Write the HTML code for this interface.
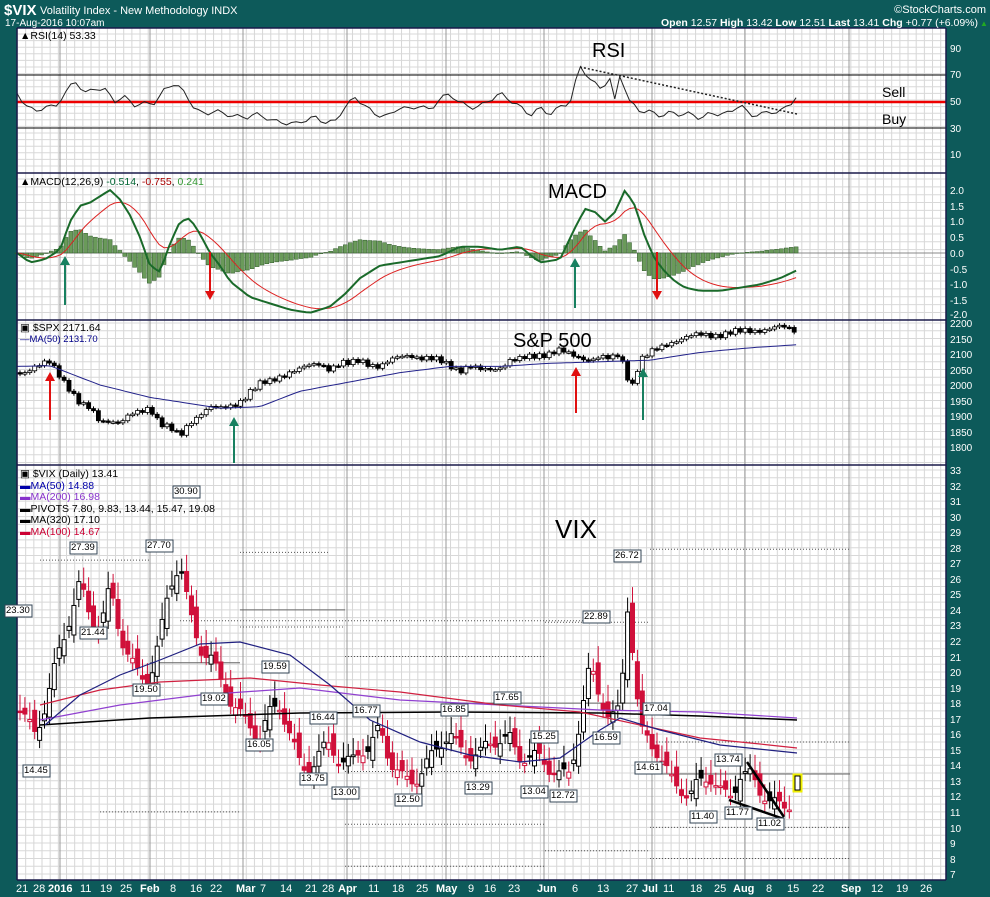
<!DOCTYPE html>
<html><head><meta charset="utf-8"><style>
html,body{margin:0;padding:0;background:#0d5a5a;}
svg{display:block;font-family:"Liberation Sans",sans-serif;}
</style></head><body>
<svg id="s" width="990" height="897" viewBox="0 0 990 897">
<defs>
<pattern id="gv" x="17" y="0" width="8.17" height="897" patternUnits="userSpaceOnUse"><line x1="0.5" y1="0" x2="0.5" y2="897" stroke="#d6d6d6" stroke-width="1"/></pattern>
</defs>
<rect x="0" y="0" width="990" height="897" fill="#0d5a5a"/>
<rect x="17" y="28" width="929" height="852" fill="#fff"/>
<rect x="17" y="28" width="929" height="852" fill="url(#gv)"/>
<g id="hg"></g>
<g id="mg"></g>
<g id="plot"></g>
<g stroke="#1a1a4a" stroke-width="1.5" fill="none">
<line x1="17" y1="28" x2="946" y2="28"/>
<line x1="17" y1="173" x2="946" y2="173"/>
<line x1="17" y1="320" x2="946" y2="320"/>
<line x1="17" y1="465" x2="946" y2="465"/>
<line x1="17" y1="880" x2="946" y2="880"/>
<line x1="17" y1="28" x2="17" y2="880"/>
<line x1="946" y1="28" x2="946" y2="880"/>
</g>
<text x="4" y="15" fill="#fff" font-size="15" font-weight="bold">$VIX</text>
<text x="40" y="14" fill="#fff" font-size="11">Volatility Index - New Methodology  INDX</text>
<text x="5" y="26" fill="#fff" font-size="10">17-Aug-2016 10:07am</text>
<text x="986" y="13" fill="#fff" font-size="11" text-anchor="end">©StockCharts.com</text>
<text x="978" y="26" fill="#fff" font-size="10.5" text-anchor="end"><tspan font-weight="bold">Open</tspan> 12.57 <tspan font-weight="bold">High</tspan> 13.42 <tspan font-weight="bold">Low</tspan> 12.51 <tspan font-weight="bold">Last</tspan> 13.41 <tspan font-weight="bold">Chg</tspan> +0.77 (+6.09%)</text>
<text x="980" y="26" fill="#2a2" font-size="8">▲</text>
<text x="20" y="39" font-size="10.5" fill="#000">▲RSI(14) 53.33</text>
<text x="20" y="185" font-size="10.5" fill="#000">▲MACD(12,26,9) <tspan fill="#063">-0.514</tspan>, <tspan fill="#a00">-0.755</tspan>, <tspan fill="#393">0.241</tspan></text>
<text x="20" y="331" font-size="10.5" fill="#000">▣ $SPX 2171.64</text>
<text x="20" y="342" font-size="9.5" fill="#008"><tspan>—</tspan>MA(50) 2131.70</text>
<g font-size="10.5">
<text x="20" y="477" fill="#000">▣ $VIX (Daily) 13.41</text>
<text x="20" y="489" fill="#00a">▬MA(50) 14.88</text>
<text x="20" y="500" fill="#83c">▬MA(200) 16.98</text>
<text x="20" y="512" fill="#000">▬PIVOTS 7.80, 9.83, 13.44, 15.47, 19.08</text>
<text x="20" y="523" fill="#000">▬MA(320) 17.10</text>
<text x="20" y="535" fill="#c03">▬MA(100) 14.67</text>
</g>
<text x="592" y="57" font-size="20" fill="#000">RSI</text>
<text x="548" y="198" font-size="20" fill="#000">MACD</text>
<text x="513" y="347" font-size="20" fill="#000">S&amp;P 500</text>
<text x="555" y="538" font-size="26" fill="#000">VIX</text>
<text x="882" y="97" font-size="14" fill="#000">Sell</text>
<text x="882" y="124" font-size="14" fill="#000">Buy</text>
<g fill="#fff" font-size="10">
<text x="950" y="52">90</text><text x="950" y="78">70</text><text x="950" y="105">50</text><text x="950" y="132">30</text><text x="950" y="158">10</text>
<text x="950" y="194">2.0</text><text x="950" y="210">1.5</text><text x="950" y="225">1.0</text><text x="950" y="241">0.5</text><text x="950" y="257">0.0</text><text x="950" y="273">-0.5</text><text x="950" y="288">-1.0</text><text x="950" y="304">-1.5</text><text x="950" y="318">-2.0</text>
<text x="950" y="327">2200</text><text x="950" y="343">2150</text><text x="950" y="358">2100</text><text x="950" y="374">2050</text><text x="950" y="389">2000</text><text x="950" y="405">1950</text><text x="950" y="420">1900</text><text x="950" y="436">1850</text><text x="950" y="451">1800</text>
<text x="950" y="474">33</text><text x="950" y="490">32</text><text x="950" y="505">31</text><text x="950" y="521">30</text><text x="950" y="536">29</text><text x="950" y="552">28</text><text x="950" y="567">27</text><text x="950" y="583">26</text><text x="950" y="598">25</text><text x="950" y="614">24</text><text x="950" y="629">23</text><text x="950" y="645">22</text><text x="950" y="661">21</text><text x="950" y="676">20</text><text x="950" y="692">19</text><text x="950" y="707">18</text><text x="950" y="723">17</text><text x="950" y="738">16</text><text x="950" y="754">15</text><text x="950" y="769">14</text><text x="950" y="785">13</text><text x="950" y="800">12</text><text x="950" y="816">11</text><text x="950" y="832">10</text><text x="950" y="847">9</text><text x="950" y="863">8</text><text x="950" y="878">7</text>
</g>
<g fill="#fff" font-size="11">
<text x="16" y="892">21</text><text x="33" y="892">28</text><text x="48" y="892" font-weight="bold">2016</text><text x="80" y="892">11</text><text x="100" y="892">19</text><text x="120" y="892">25</text><text x="140" y="892" font-weight="bold">Feb</text><text x="170" y="892">8</text><text x="190" y="892">16</text><text x="210" y="892">22</text><text x="236" y="892" font-weight="bold">Mar</text><text x="260" y="892">7</text><text x="280" y="892">14</text><text x="305" y="892">21</text><text x="322" y="892">28</text><text x="338" y="892" font-weight="bold">Apr</text><text x="368" y="892">11</text><text x="392" y="892">18</text><text x="416" y="892">25</text><text x="436" y="892" font-weight="bold">May</text><text x="468" y="892">9</text><text x="484" y="892">16</text><text x="508" y="892">23</text><text x="537" y="892" font-weight="bold">Jun</text><text x="572" y="892">6</text><text x="597" y="892">13</text><text x="626" y="892">27</text><text x="642" y="892" font-weight="bold">Jul</text><text x="663" y="892">11</text><text x="690" y="892">18</text><text x="714" y="892">25</text><text x="733" y="892" font-weight="bold">Aug</text><text x="766" y="892">8</text><text x="787" y="892">15</text><text x="812" y="892">22</text><text x="841" y="892" font-weight="bold">Sep</text><text x="871" y="892">12</text><text x="896" y="892">19</text><text x="920" y="892">26</text>
</g>
<g id="lbl"></g>
</svg>
<script>
var NS="http://www.w3.org/2000/svg";
function el(p,t,a){var e=document.createElementNS(NS,t);for(var k in a)e.setAttribute(k,a[k]);p.appendChild(e);return e;}
var hg=document.getElementById('hg'),mg=document.getElementById('mg'),P=document.getElementById('plot');
function hl(y0,y1,st){for(var y=y0;y<=y1;y+=st)el(hg,'line',{x1:17,x2:946,y1:y,y2:y,stroke:'#d8d8d8'});}
hl(34,172,6.6);hl(179,320,7.85);hl(323,465,7.75);hl(470,880,7.77);
[60,150,243,347,446,544,652,745,849].forEach(function(x){el(mg,'line',{x1:x,x2:x,y1:28,y2:880,stroke:'#999'});});
el(mg,'line',{x1:17,x2:946,y1:75,y2:75,stroke:'#000'});
el(mg,'line',{x1:17,x2:946,y1:128,y2:128,stroke:'#000'});
el(mg,'line',{x1:17,x2:946,y1:102,y2:102,stroke:'#e00',"stroke-width":2.5});
el(mg,'line',{x1:17,x2:946,y1:253,y2:253,stroke:'#888'});
function interp(pts,x){if(x<=pts[0][0])return pts[0][1];for(var i=1;i<pts.length;i++){if(x<=pts[i][0]){var a=pts[i-1],b=pts[i];return a[1]+(b[1]-a[1])*(x-a[0])/(b[0]-a[0]);}}return pts[pts.length-1][1];}
function line(pts,fy,col,w,noise){var s='';for(var x=pts[0][0];x<=pts[pts.length-1][0];x+=4.9){var v=interp(pts,x)+(noise?noise*Math.sin(x*1.7)*Math.cos(x*0.53):0);s+=x.toFixed(1)+','+fy(v).toFixed(1)+' ';}el(P,'polyline',{points:s,fill:'none',stroke:col,'stroke-width':w||1});}
var rsi=[[17,55],[25,48],[35,44],[45,48],[55,46],[65,55],[75,65],[85,57],[95,62],[105,60],[115,50],[125,52],[135,47],[145,50],[155,51],[165,60],[175,63],[185,55],[195,45],[205,42],[215,45],[225,40],[235,38],[245,37],[255,42],[265,40],[275,36],[285,33],[295,32],[305,36],[315,40],[325,36],[335,35],[345,45],[355,52],[365,48],[375,42],[390,40],[400,45],[410,43],[420,48],[430,45],[440,54],[450,55],[460,48],[470,45],[480,48],[490,53],[500,57],[510,50],[520,45],[530,40],[540,47],[550,42],[560,46],[570,48],[580,76],[590,68],[600,62],[610,68],[615,50],[620,70],[630,48],[640,43],[650,44],[660,41],[670,42],[680,39],[690,40],[700,38],[710,43],[720,42],[730,41],[740,47],[750,39],[760,42],[770,44],[780,43],[790,47],[797,53]];
line(rsi,function(v){return 102-(v-50)*1.325;},'#222',1,3);
el(P,'line',{x1:580,y1:67,x2:797,y2:114,stroke:'#222','stroke-width':1.5,'stroke-dasharray':'2,2'});
var mY=function(v){return 253-v*31.5;};
var mac=[[17,0],[30,-0.3],[45,-0.2],[60,0.1],[70,1.0],[80,1.5],[90,1.6],[100,1.8],[110,2.0],[120,1.7],[130,1.2],[140,0.5],[150,-0.4],[160,-0.6],[170,0.3],[180,1.0],[190,1.1],[200,0.6],[210,0],[220,-0.4],[230,-0.9],[250,-1.4],[270,-1.6],[290,-1.8],[310,-1.9],[330,-1.7],[345,-1.3],[360,-0.8],[380,-0.4],[400,-0.3],[420,-0.2],[440,-0.1],[460,0.2],[480,0.2],[500,0.1],[520,0.2],[540,-0.3],[560,-0.2],[575,0.8],[585,1.4],[595,1.3],[605,1.0],[615,1.3],[625,2.0],[635,1.5],[645,0.5],[655,-0.2],[665,-0.6],[675,-0.9],[685,-1.1],[700,-1.2],[720,-1.2],[740,-1.1],[760,-1.0],[780,-0.8],[797,-0.55]];
var ms=[],sg=[],s=0,first=true;for(var x=17;x<=797;x+=4.9){var v=interp(mac,x);if(first){s=v;first=false;}s=s+(v-s)*0.2;ms.push([x,v]);sg.push([x,s]);}
ms.forEach(function(p,i){var h=(p[1]-sg[i][1]);var y0=253,y1=253-h*31.5*0.9;el(P,'rect',{x:p[0]-2,y:Math.min(y0,y1),width:4,height:Math.max(0.5,Math.abs(y1-y0)),fill:'#6a9a5a',stroke:'#2f5a2a','stroke-width':0.5});});
line(sg,mY,'#d22',1);line(ms,mY,'#1a6a2a',2);
function arrow(x,y1,y2,col){var up=y2<y1;el(P,'line',{x1:x,x2:x,y1:y1,y2:y2+(up?5:-5),stroke:col,'stroke-width':2});var d=up?'M'+(x-5)+','+(y2+9)+' L'+x+','+y2+' L'+(x+5)+','+(y2+9)+'Z':'M'+(x-5)+','+(y2-9)+' L'+x+','+y2+' L'+(x+5)+','+(y2-9)+'Z';el(P,'path',{d:d,fill:col});}
arrow(65,305,256,'#188060');arrow(575,308,258,'#188060');arrow(210,252,300,'#e01010');arrow(657,252,300,'#e01010');
var sY=function(p){return 323+(2200-p)*0.31;};
var spx=[[20,2040],[35,2060],[50,2070],[60,2030],[70,1990],[80,1940],[90,1920],[100,1880],[110,1890],[120,1880],[130,1900],[140,1910],[150,1930],[160,1880],[170,1860],[180,1830],[190,1880],[200,1910],[210,1930],[220,1920],[230,1930],[240,1950],[250,1980],[260,2000],[270,2010],[280,2030],[290,2045],[300,2050],[310,2060],[320,2070],[330,2055],[340,2070],[350,2065],[360,2080],[380,2060],[400,2090],[410,2100],[420,2090],[440,2075],[450,2065],[460,2050],[470,2060],[480,2045],[490,2050],[500,2060],[510,2080],[520,2080],[530,2090],[540,2100],[560,2110],[570,2095],[590,2085],[600,2090],[610,2080],[620,2100],[626,2040],[632,2000],[640,2080],[650,2100],[660,2120],[670,2140],[680,2150],[700,2160],[720,2165],[740,2170],[760,2180],[780,2185],[797,2175]];
var prev=2040;for(var x=20;x<=797;x+=4.9){var c=interp(spx,x)+14*Math.sin(x*2.3)*Math.cos(x*0.41);var o=prev;var hi=Math.max(o,c)+7,lo=Math.min(o,c)-7;el(P,'line',{x1:x,x2:x,y1:sY(hi),y2:sY(lo),stroke:'#000'});el(P,'rect',{x:x-2,y:sY(Math.max(o,c)),width:4,height:Math.max(1.5,Math.abs(sY(o)-sY(c))),fill:c>o?'#fff':'#000',stroke:'#000','stroke-width':0.8});prev=c;}
line([[17,2060],[50,2062],[100,2000],[150,1960],[220,1925],[260,1930],[300,1980],[350,2010],[400,2040],[450,2060],[500,2060],[550,2070],[600,2075],[650,2080],[700,2105],[750,2120],[797,2130]],sY,'#22228a',1);
arrow(50,420,372,'#e01010');arrow(576,413,367,'#e01010');arrow(234,463,417,'#188060');arrow(643,420,368,'#188060');
var vY=function(v){return 470+(33-v)*15.54;};
[[180,610,23.3],[240,330,27.7],[40,150,27.2],[240,345,22.9],[345,545,21.0],[345,545,13.6],[545,650,23.2],[545,650,8.5],[650,850,27.9],[650,850,10.0],[650,850,8.0],[650,850,15.5],[345,545,10.2],[100,240,11.0],[345,545,7.5]].forEach(function(a){el(P,'line',{x1:a[0],x2:a[1],y1:vY(a[2]),y2:vY(a[2]),stroke:'#555','stroke-dasharray':'1,2'});});
[[150,240,20.6],[240,345,24.0],[650,850,13.44],[450,650,18.0]].forEach(function(a){el(P,'line',{x1:a[0],x2:a[1],y1:vY(a[2]),y2:vY(a[2]),stroke:'#666'});});
var vix=[[20,17.5],[35,16.5],[45,18],[55,20],[65,22],[80,26],[90,24],[100,23],[110,25],[120,22],[130,21],[140,20],[150,20],[160,22],[170,25],[180,27],[190,24],[200,22],[210,21],[220,19],[230,18],[240,17.5],[250,17],[260,16],[270,17],[280,17.5],[290,16],[300,14.5],[310,14],[320,14.5],[330,15],[340,14],[350,14.5],[360,15.5],[370,15],[380,16],[390,14],[400,13.5],[410,13.5],[420,13.5],[430,14],[440,15],[450,16],[460,15.5],[470,15],[480,14.5],[490,15],[500,15.5],[510,16],[520,15],[530,14.5],[540,14],[550,13.5],[560,13.5],[570,14],[580,17],[590,20],[600,18],[610,17],[620,18],[628,25],[635,20],[640,16],[650,15],[660,14.5],[670,13.5],[680,13],[690,12],[700,12.5],[710,13],[720,12.5],[730,12.5],[740,13.5],[750,13],[760,12],[770,11.7],[780,11.8],[790,11.9]];
prev=17.5;for(var x=20;x<=792;x+=4.9){var c=interp(vix,x)+0.9*Math.sin(x*2.1)*Math.cos(x*0.7);var o=prev+0.6*Math.sin(x*3.3);var hi=Math.max(o,c)+0.6+0.5*Math.abs(Math.sin(x)),lo=Math.min(o,c)-0.5;var col=c<prev?'#d0103a':'#000';el(P,'line',{x1:x,x2:x,y1:vY(hi),y2:vY(lo),stroke:col});el(P,'rect',{x:x-2,y:vY(Math.max(o,c)),width:4,height:Math.max(1.5,Math.abs(vY(o)-vY(c))),fill:c>o?'#fff':col,stroke:col,'stroke-width':1});prev=c;}
el(P,'rect',{x:795,y:776,width:5,height:14,fill:'#fff',stroke:'#000'});
el(P,'rect',{x:793.5,y:774.5,width:8,height:17,fill:'none',stroke:'#ee0','stroke-width':2});
function yl(pts,col,w){var s=pts.map(function(p){return p[0]+','+p[1];}).join(' ');el(P,'polyline',{points:s,fill:'none',stroke:col,'stroke-width':w});}
yl([[40,725],[150,718],[300,713],[450,712],[600,713],[700,716],[797,720]],'#000',1.5);
yl([[40,720],[120,705],[200,695],[300,688],[400,700],[500,705],[600,710],[700,712],[797,718]],'#9040d0',1.2);
yl([[40,705],[100,690],[160,682],[250,678],[320,685],[400,692],[500,705],[580,712],[640,725],[700,738],[760,744],[797,748]],'#d02040',1.2);
yl([[45,725],[80,695],[120,675],[160,660],[200,644],[240,642],[290,655],[330,685],[370,720],[420,742],[470,755],[520,762],[560,758],[600,730],[620,718],[660,730],[720,745],[797,753]],'#202080',1.2);
el(P,'line',{x1:747,y1:762,x2:784,y2:817,stroke:'#000','stroke-width':2.5});
el(P,'line',{x1:729,y1:800,x2:784,y2:819,stroke:'#000','stroke-width':2.5});
var L=document.getElementById('lbl');
[[5,605],[70,542],[173,486],[146,540],[80,627],[133,684],[201,693],[262,661],[246,739],[310,712],[353,705],[300,773],[332,787],[395,794],[441,704],[494,692],[531,731],[465,782],[521,786],[550,790],[583,611],[614,550],[593,732],[643,703],[635,762],[715,754],[690,811],[725,807],[757,818],[23,765]].forEach(function(a){el(L,'rect',{x:a[0],y:a[1],width:27,height:12,fill:'#fff',stroke:'#345','stroke-width':1});});
</script>
<div style="position:absolute;left:0;top:0;width:990px;height:897px;pointer-events:none;font-family:'Liberation Sans',sans-serif;font-size:9.5px;color:#000">
<span style="position:absolute;left:6px;top:605px">23.30</span><span style="position:absolute;left:71px;top:542px">27.39</span><span style="position:absolute;left:174px;top:486px">30.90</span><span style="position:absolute;left:147px;top:540px">27.70</span><span style="position:absolute;left:81px;top:627px">21.44</span><span style="position:absolute;left:134px;top:684px">19.50</span><span style="position:absolute;left:202px;top:693px">19.02</span><span style="position:absolute;left:263px;top:661px">19.59</span><span style="position:absolute;left:247px;top:739px">16.05</span><span style="position:absolute;left:311px;top:712px">16.44</span><span style="position:absolute;left:354px;top:705px">16.77</span><span style="position:absolute;left:301px;top:773px">13.75</span><span style="position:absolute;left:333px;top:787px">13.00</span><span style="position:absolute;left:396px;top:794px">12.50</span><span style="position:absolute;left:442px;top:704px">16.85</span><span style="position:absolute;left:495px;top:692px">17.65</span><span style="position:absolute;left:532px;top:731px">15.25</span><span style="position:absolute;left:466px;top:782px">13.29</span><span style="position:absolute;left:522px;top:786px">13.04</span><span style="position:absolute;left:551px;top:790px">12.72</span><span style="position:absolute;left:584px;top:611px">22.89</span><span style="position:absolute;left:615px;top:550px">26.72</span><span style="position:absolute;left:594px;top:732px">16.59</span><span style="position:absolute;left:644px;top:703px">17.04</span><span style="position:absolute;left:636px;top:762px">14.61</span><span style="position:absolute;left:716px;top:754px">13.74</span><span style="position:absolute;left:691px;top:811px">11.40</span><span style="position:absolute;left:726px;top:807px">11.77</span><span style="position:absolute;left:758px;top:818px">11.02</span><span style="position:absolute;left:24px;top:765px">14.45</span>
</div>
</body></html>
